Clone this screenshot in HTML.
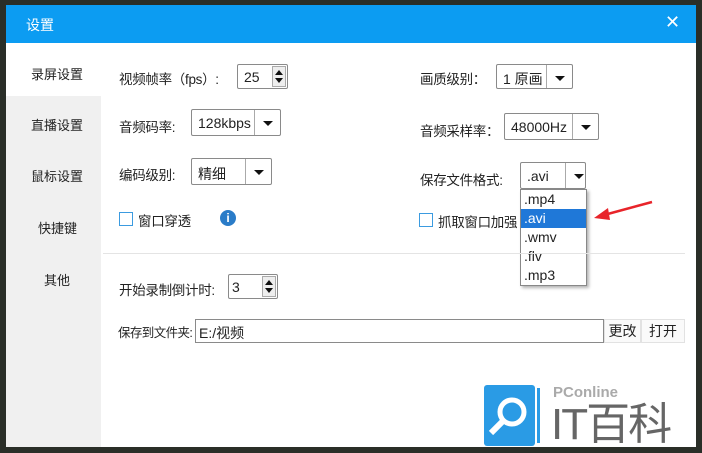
<!DOCTYPE html>
<html><head><meta charset="utf-8"><style>
*{margin:0;padding:0;box-sizing:border-box}
body{width:702px;height:453px;position:relative;overflow:hidden;background:#2a2e28;font-family:"Liberation Sans","Noto Sans CJK SC",sans-serif;font-size:13px;color:#222;font-variant-ligatures:none}
.a{position:absolute;white-space:nowrap}
.box{position:absolute;border:1px solid #8a8a8a;background:#fff;border-radius:2px}
.dd{position:absolute;right:0;top:0;bottom:0;width:26px;border-left:1px solid #aaa}
.dd:after{content:"";position:absolute;left:8px;top:11px;border-left:5px solid transparent;border-right:5px solid transparent;border-top:5px solid #111}
.sp{position:absolute;right:1px;top:1px;bottom:1px;width:14px;border:1px solid #aaa;background:#eee}
.sp:before{content:"";position:absolute;left:2px;top:3px;border-left:4px solid transparent;border-right:4px solid transparent;border-bottom:5px solid #111}
.sp:after{content:"";position:absolute;left:2px;bottom:3px;border-left:4px solid transparent;border-right:4px solid transparent;border-top:5px solid #111}
.t{position:absolute;left:6px;top:4px;font-size:14px}
.cb{position:absolute;width:14px;height:14px;border:1px solid #3b9be0;background:#fff}
.l{font-size:13.5px;letter-spacing:-0.3px}
</style></head><body>
<div class="a" style="left:6px;top:5px;width:690px;height:442px;background:#fff"></div>
<div class="a" style="left:6px;top:5px;width:690px;height:38px;background:#0c9cf2"></div>
<div class="a" style="left:26px;top:15px;color:#fff;font-size:14px">设置</div>
<div class="a" style="left:665px;top:12px;color:#fff;font-size:18px">✕</div>
<div class="a" style="left:6px;top:43px;width:95px;height:404px;background:#f0f0f0"></div>
<div class="a" style="left:6px;top:43px;width:95px;height:53px;background:#fff"></div>
<div class="a" style="left:31px;top:64px">录屏设置</div>
<div class="a" style="left:31px;top:115px">直播设置</div>
<div class="a" style="left:31px;top:166px">鼠标设置</div>
<div class="a" style="left:38px;top:218px">快捷键</div>
<div class="a" style="left:44px;top:270px">其他</div>

<div class="a l" style="left:119px;top:68px">视频帧率（fps）:</div>
<div class="box" style="left:237px;top:64px;width:51px;height:25px"><span class="t">25</span><div class="sp"></div></div>
<div class="a l" style="left:420px;top:68px">画质级别：</div>
<div class="box" style="left:496px;top:64px;width:77px;height:25px"><span class="t">1 原画</span><div class="dd"></div></div>

<div class="a l" style="left:119px;top:116px">音频码率:</div>
<div class="box" style="left:191px;top:109px;width:90px;height:27px"><span class="t" style="top:5px">128kbps</span><div class="dd"></div></div>
<div class="a l" style="left:420px;top:120px">音频采样率：</div>
<div class="box" style="left:504px;top:113px;width:95px;height:27px"><span class="t" style="top:5px">48000Hz</span><div class="dd"></div></div>

<div class="a l" style="left:119px;top:164px">编码级别:</div>
<div class="box" style="left:191px;top:158px;width:81px;height:27px"><span class="t" style="top:5px">精细</span><div class="dd"></div></div>
<div class="a l" style="left:420px;top:169px">保存文件格式:</div>
<div class="box" style="left:520px;top:162px;width:66px;height:27px"><span class="t" style="top:5px">.avi</span><div class="dd" style="width:20px"></div></div>

<div class="cb" style="left:119px;top:212px"></div>
<div class="a l" style="left:138px;top:210px">窗口穿透</div>
<div class="a" style="left:220px;top:210px;width:16px;height:16px;border-radius:50%;background:#2a7cc8;color:#fff;font-size:12px;font-weight:bold;text-align:center;line-height:16px">i</div>
<div class="cb" style="left:419px;top:213px"></div>
<div class="a l" style="left:438px;top:211px">抓取窗口加强</div>

<div class="a" style="left:520px;top:189px;width:67px;height:97px;background:#fff;border:1px solid #888;box-shadow:2px 2px 3px rgba(0,0,0,.3);font-size:14px;line-height:19px">
<div style="padding-left:3px">.mp4</div>
<div style="padding-left:3px;background:#1f78d8;color:#fff">.avi</div>
<div style="padding-left:3px">.wmv</div>
<div style="padding-left:3px">.f<span>l</span>v</div>
<div style="padding-left:3px">.mp3</div>
</div>
<svg class="a" style="left:590px;top:198px" width="66" height="24"><path d="M62 4 L14 17" stroke="#e8242a" stroke-width="2.5"/><path d="M4 20 L18 10 L20 22 Z" fill="#e8242a"/></svg>

<div class="a" style="left:103px;top:253px;width:582px;height:1px;background:#e4e4e4"></div>

<div class="a l" style="left:119px;top:279px">开始录制倒计时:</div>
<div class="box" style="left:228px;top:274px;width:50px;height:25px"><span class="t" style="left:3px">3</span><div class="sp"></div></div>

<div class="a" style="left:118px;top:322px;font-size:12.5px;letter-spacing:-0.6px">保存到文件夹:</div>
<div class="box" style="left:195px;top:319px;width:409px;height:24px;border-radius:0"><span class="t" style="left:3px;top:3px">E:/视频</span></div>
<div class="a" style="left:604px;top:319px;width:37px;height:24px;border:1px solid #e2e2e2;background:#fafafa;text-align:center;line-height:22px;font-size:14px">更改</div>
<div class="a" style="left:641px;top:319px;width:44px;height:24px;border:1px solid #e2e2e2;background:#fafafa;text-align:center;line-height:22px;font-size:14px">打开</div>

<svg class="a" style="left:484px;top:384px" width="60" height="63"><rect x="0" y="1" width="51" height="61" rx="3" fill="#2a9be5"/><rect x="53" y="4" width="3" height="55" fill="#2a9be5"/><circle cx="28" cy="28" r="12" fill="none" stroke="#fff" stroke-width="5"/><path d="M19 37 L7 49" stroke="#fff" stroke-width="6"/></svg>
<div class="a" style="left:553px;top:384px;color:#aaa;font-size:15px;font-weight:bold">PConline</div>
<div class="a" style="left:551px;top:400px;color:#666;font-size:44px;letter-spacing:-2px;line-height:50px">IT百科</div>
</body></html>
